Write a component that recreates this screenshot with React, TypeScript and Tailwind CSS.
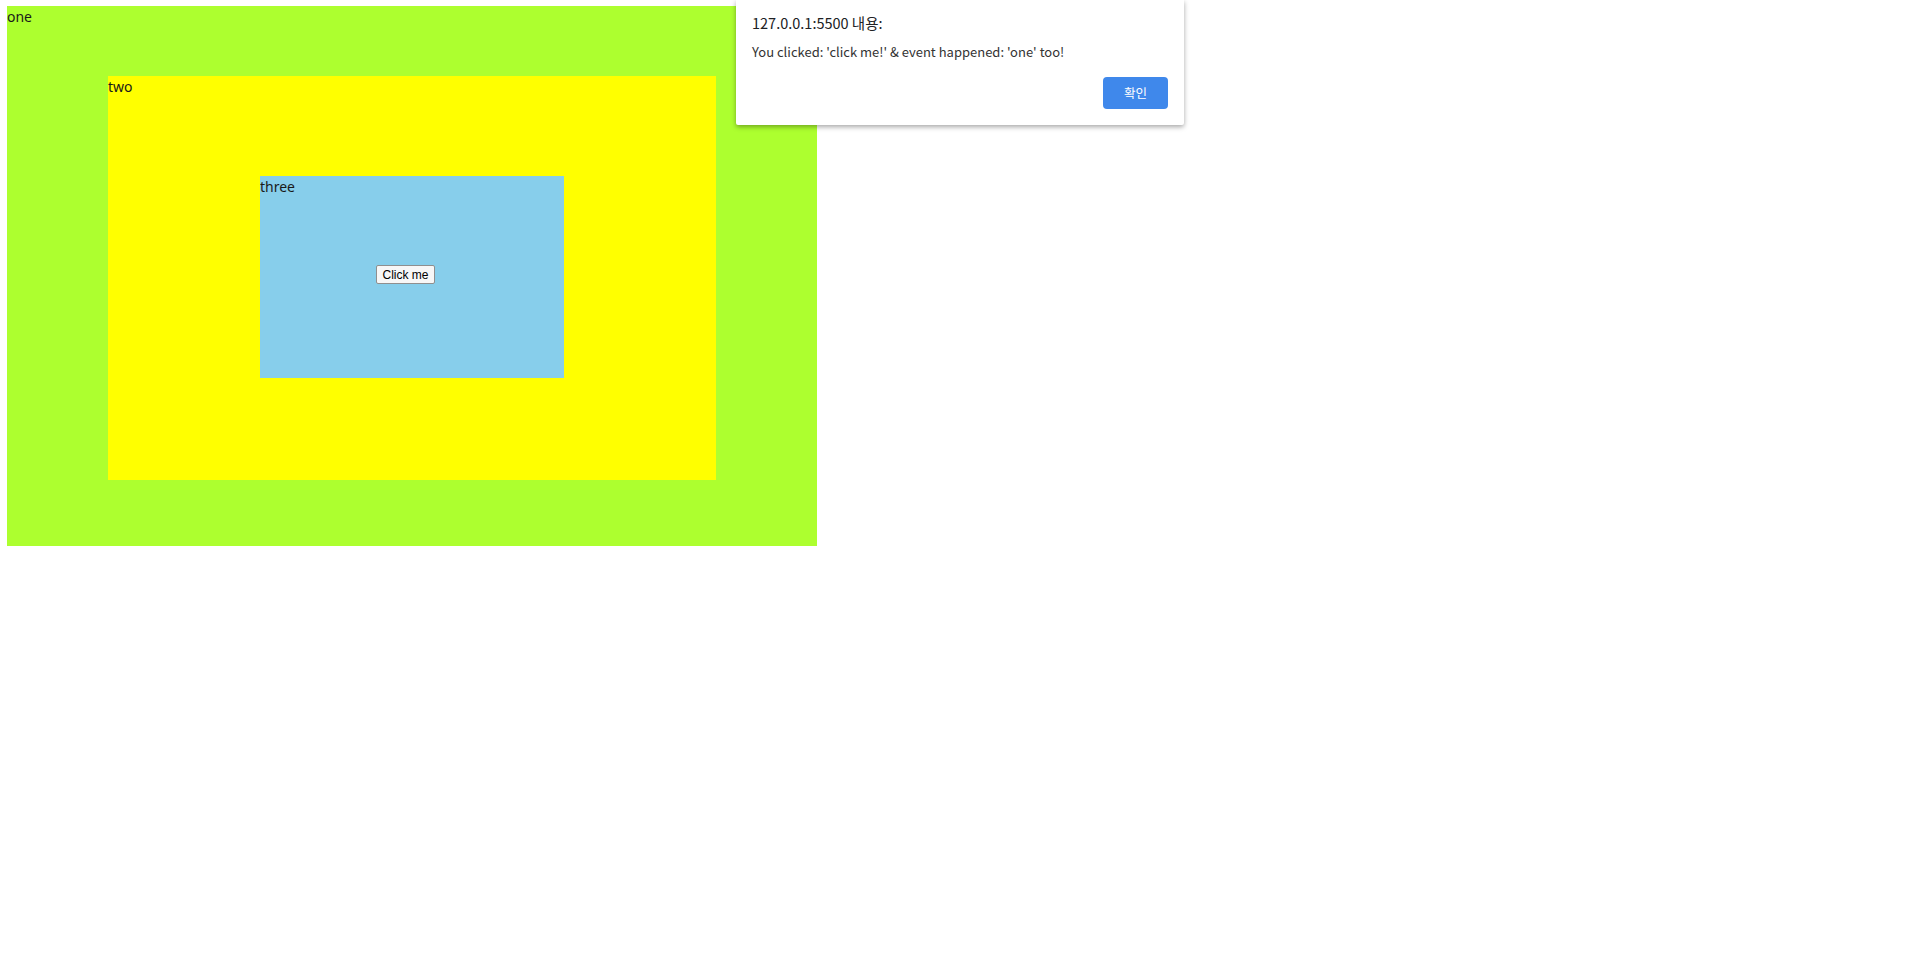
export default function App() {
  return (
    <div className="relative min-h-[964px] bg-white pl-[7px] pt-[6px] text-[14px] text-[#1a1a1a]" style={{ fontFamily: '"Noto Sans", "Noto Sans CJK KR", sans-serif' }}>
      {/* one */}
      <div className="w-[810px] h-[540px] bg-[#adff2f] overflow-hidden">
        <div className="leading-[22px]">one</div>
        {/* two */}
        <div className="ml-[101px] mt-[48px] w-[608px] h-[404px] bg-[#ffff00] overflow-hidden">
          <div className="leading-[22px]">two</div>
          {/* three */}
          <div className="ml-[152px] mt-[78px] w-[304px] h-[202px] bg-[#87ceeb] overflow-hidden">
            <div className="leading-[22px]">three</div>
            <button
              className="ml-[116px] mt-[67px] flex h-[19px] w-[59px] items-center justify-center rounded-[2px] border border-[#8f8f8f] bg-[#f7f7f7] text-[12px] text-black"
              style={{ fontFamily: '"Liberation Sans", Arial, sans-serif' }}
            >
              Click me
            </button>
          </div>
        </div>
      </div>

      {/* alert dialog */}
      <div className="absolute left-[736px] top-0 w-[448px] rounded-b-[2px] bg-white px-[16px] pt-[13px] pb-[16px] shadow-[0_2px_5px_rgba(0,0,0,0.35)]" style={{ fontFamily: '"Noto Sans CJK KR", "Noto Sans", sans-serif' }}>
        <div className="text-[14.5px] leading-[20px] text-[#202124]">127.0.0.1:5500 내용:</div>
        <div className="mt-[10px] text-[13px] leading-[18px] text-[#333]">You clicked: 'click me!' &amp; event happened: 'one' too!</div>
        <div className="mt-[16px] flex justify-end">
          <button className="flex h-[32px] w-[65px] items-center justify-center rounded-[4px] bg-[#3f88eb] text-[12.5px] text-white">확인</button>
        </div>
      </div>
    </div>
  )
}
